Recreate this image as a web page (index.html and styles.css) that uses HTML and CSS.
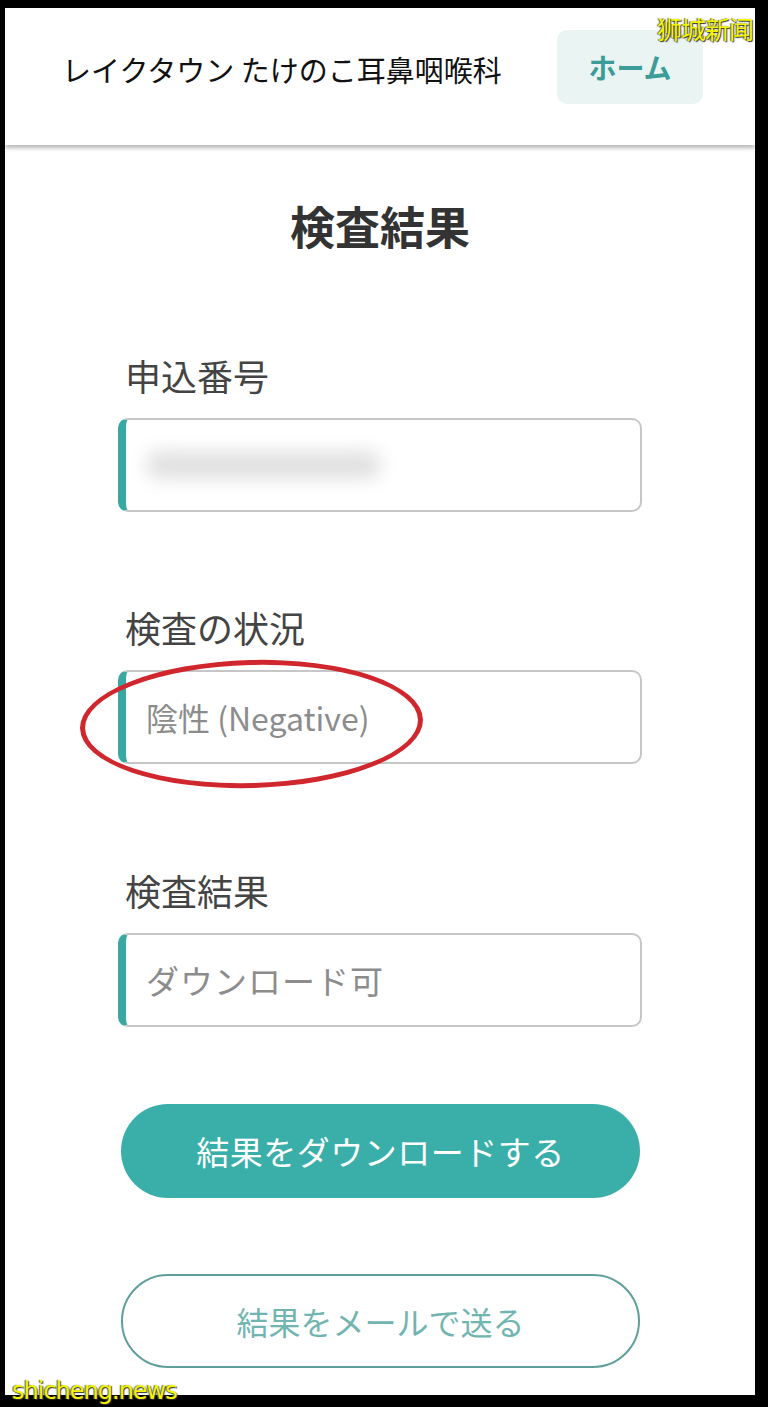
FILE: index.html
```html
<!DOCTYPE html>
<html lang="ja">
<head>
  <meta charset="UTF-8">
  <meta name="viewport" content="width=device-width, initial-scale=1.0">
  <title>検査結果</title>
  <link rel="stylesheet" href="styles.css">
</head>
<body>
  <div class="frame">
    <div class="screen">
      <header class="header">
        <div class="clinic">レイクタウン たけのこ耳鼻咽喉科</div>
        <a class="home" href="#">ホーム</a>
      </header>

      <main class="content">
        <h1 class="title">検査結果</h1>

        <div class="field">
          <div class="label">申込番号</div>
          <div class="box"><span class="blurred"></span></div>
        </div>

        <div class="field field-status">
          <div class="label">検査の状況</div>
          <div class="box">
            陰性 (Negative)
            <span class="circle"></span>
          </div>
        </div>

        <div class="field field-result">
          <div class="label">検査結果</div>
          <div class="box box-wide">ダウンロード可</div>
        </div>

        <button class="btn btn-primary" type="button">結果をダウンロードする</button>
        <button class="btn btn-outline" type="button">結果をメールで送る</button>
      </main>
    </div>

    <span class="mark mark-top">狮城新闻</span>
    <span class="mark mark-bottom">shicheng.news</span>
  </div>
</body>
</html>
```

FILE: styles.css
```css
body {
  margin: 0;
  background-color: #000;
  font-family: "Noto Sans CJK JP", "Noto Sans", sans-serif;
}
.frame {
  position: relative;
  height: 1407px;
  padding: 8px 13px 12px 5px;
  box-sizing: border-box;
}
.screen {
  height: 100%;
  background-color: #fff;
  overflow: hidden;
}
.header {
  height: 137px;
  box-sizing: border-box;
  padding: 22px 52px 0 57px;
  display: flex;
  align-items: flex-start;
  justify-content: space-between;
  box-shadow: 0 3px 4px rgba(0, 0, 0, 0.28);
  position: relative;
}
.clinic {
  font-size: 29px;
  color: #111;
  line-height: 74px;
  padding-top: 2px;
}
.home {
  width: 146px;
  height: 74px;
  border-radius: 10px;
  background-color: #eaf4f3;
  color: #3c9c97;
  font-size: 28px;
  font-weight: bold;
  line-height: 74px;
  text-align: center;
  text-decoration: none;
}
.content {
  width: 524px;
  margin: 0 auto;
}
.title {
  margin: 54px 0 0;
  font-size: 45px;
  line-height: 54px;
  font-weight: bold;
  color: #333;
  text-align: center;
}
.field {
  margin-top: 98px;
}
.field-status {
  margin-top: 91px;
}
.field-result {
  margin-top: 102px;
}
.label {
  font-size: 36px;
  line-height: 48px;
  color: #444;
  padding-left: 7px;
  margin-bottom: 19px;
}
.box {
  position: relative;
  height: 94px;
  box-sizing: border-box;
  border: 2px solid #c6c6c6;
  border-left: 8px solid #3aa8a2;
  border-radius: 10px;
  padding-left: 20px;
  display: flex;
  align-items: center;
  font-size: 32px;
  color: #8c8c8c;
}
.box-wide {
  font-size: 33px;
  letter-spacing: 1px;
}
.blurred {
  width: 235px;
  height: 28px;
  border-radius: 14px;
  background-color: #e0e0e0;
  filter: blur(9px);
}
.circle {
  position: absolute;
  left: -46px;
  top: -12px;
  width: 343px;
  height: 128px;
  box-sizing: border-box;
  border: 5px solid #d0262d;
  border-radius: 50%;
  transform: rotate(-1.5deg);
}
.btn {
  display: block;
  width: 519px;
  height: 94px;
  margin: 77px 0 0 3px;
  border-radius: 47px;
  font-family: inherit;
  font-size: 32px;
  cursor: pointer;
}
.btn-primary {
  background-color: #3aafa9;
  color: #fff;
  font-size: 33px;
  letter-spacing: 0.5px;
  border: none;
}
.btn-outline {
  margin-top: 76px;
  background-color: #fff;
  color: #72b5b0;
  border: 2px solid #5f9f9b;
}
.mark {
  position: absolute;
  color: #f4f400;
  text-shadow: 1px 1px 1px #333, -1px 0 1px #666;
}
.mark-top {
  top: 10px;
  right: 15px;
  font-family: "Noto Sans CJK SC", sans-serif;
  font-size: 25px;
  letter-spacing: -1px;
}
.mark-bottom {
  left: 12px;
  bottom: 2px;
  font-family: "DejaVu Sans", sans-serif;
  font-size: 24px;
  letter-spacing: -1px;
}
```
